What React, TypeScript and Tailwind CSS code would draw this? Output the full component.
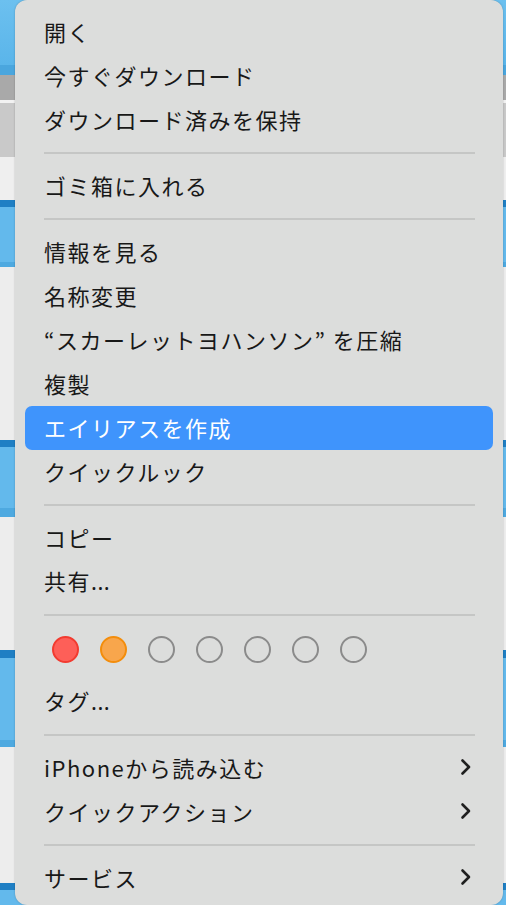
type Row =
  | { kind: 'item'; label: string; dots?: boolean; active?: boolean; submenu?: boolean }
  | { kind: 'sep' }
  | { kind: 'tags' };

const rows: Row[] = [
  { kind: 'item', label: '開く' },
  { kind: 'item', label: '今すぐダウンロード' },
  { kind: 'item', label: 'ダウンロード済みを保持' },
  { kind: 'sep' },
  { kind: 'item', label: 'ゴミ箱に入れる' },
  { kind: 'sep' },
  { kind: 'item', label: '情報を見る' },
  { kind: 'item', label: '名称変更' },
  { kind: 'item', label: '“スカーレットヨハンソン” を圧縮' },
  { kind: 'item', label: '複製' },
  { kind: 'item', label: 'エイリアスを作成', active: true },
  { kind: 'item', label: 'クイックルック' },
  { kind: 'sep' },
  { kind: 'item', label: 'コピー' },
  { kind: 'item', label: '共有', dots: true },
  { kind: 'sep' },
  { kind: 'tags' },
  { kind: 'item', label: 'タグ', dots: true },
  { kind: 'sep' },
  { kind: 'item', label: 'iPhoneから読み込む', submenu: true },
  { kind: 'item', label: 'クイックアクション', submenu: true },
  { kind: 'sep' },
  { kind: 'item', label: 'サービス', submenu: true },
];

// finder window rows peeking out behind the menu
function Backdrop() {
  return (
    <div className="flex flex-col h-full">
      <div className="h-[65px] bg-gradient-to-b from-[#6cc0ef] to-[#5ab5ea]" />
      <div className="h-[10px] bg-[#4aa6de]" />
      <div className="h-[25px] bg-[#a9a9a9]" />
      <div className="h-[3px] bg-[#f2f2f2]" />
      <div className="h-[54px] bg-[#c9c9c9]" />
      <div className="h-[43px] bg-[#efefef]" />
      <div className="h-[7px] bg-[#1f7fc4]" />
      <div className="h-[55px] bg-[#63b9ec]" />
      <div className="h-[5px] bg-[#4ea9e0]" />
      <div className="h-[173px] bg-[#ededed]" />
      <div className="h-[7px] bg-[#1f7fc4]" />
      <div className="h-[61px] bg-[#63b9ec]" />
      <div className="h-[9px] bg-[#4ea9e0]" />
      <div className="h-[133px] bg-[#ededed]" />
      <div className="h-[8px] bg-[#1f7fc4]" />
      <div className="h-[82px] bg-[#63b9ec]" />
      <div className="h-[7px] bg-[#4ea9e0]" />
      <div className="h-[136px] bg-[#ededed]" />
      <div className="h-[7px] bg-[#1f7fc4]" />
      <div className="flex-1 bg-[#63b9ec]" />
    </div>
  );
}

function TagDots() {
  return (
    <div className="h-[54px] flex items-start pt-[10px] pl-[27px] gap-[21px]">
      <span className="w-[27px] h-[27px] rounded-full bg-[#fe5f58] border-2 border-[#f23b30]" />
      <span className="w-[27px] h-[27px] rounded-full bg-[#f8a64c] border-2 border-[#f38d0c]" />
      {[0, 1, 2, 3, 4].map((i) => (
        <span key={i} className="w-[27px] h-[27px] rounded-full border-2 border-[#8b8b8b]" />
      ))}
    </div>
  );
}

function Chevron() {
  return (
    <svg width="12" height="18" viewBox="0 0 12 18" fill="none" className="mr-[1px]">
      <path d="M2.5 2.5 L9 9 L2.5 15.5" stroke="#1f1f1f" strokeWidth="2.6" strokeLinecap="round" strokeLinejoin="round" />
    </svg>
  );
}

export default function App() {
  return (
    <div
      className="relative w-[506px] h-[905px] overflow-hidden"
      style={{ fontFamily: "'Noto Sans CJK JP', 'Noto Sans', sans-serif" }}
    >
      <Backdrop />

      <div className="absolute left-[15px] top-0 w-[488px] h-[905px] rounded-[12px] bg-[#dcdddc] px-[10px] pt-[10px] shadow-[0_0_2px_rgba(0,0,0,0.25)]">
        {rows.map((row, i) => {
          if (row.kind === 'sep') {
            return (
              <div key={i} className="h-[22px] flex items-center pl-[19px] pr-[18px]">
                <div className="h-[2px] w-full bg-[#c5c6c5]" />
              </div>
            );
          }
          if (row.kind === 'tags') return <TagDots key={i} />;
          return (
            <div
              key={i}
              className={`h-[44px] flex items-center justify-between pl-[19px] pr-[20px] pb-[3px] rounded-[7px] text-[22px] tracking-[1.5px] ${
                row.active ? 'bg-[#3f94fc] text-white' : 'text-[#181818]'
              }`}
            >
              <span className="leading-none">
                {row.label}
                {row.dots && (
                  <span className="tracking-[0.5px]" style={{ fontFamily: "'Noto Sans', sans-serif" }}>
                    ...
                  </span>
                )}
              </span>
              {row.submenu && <Chevron />}
            </div>
          );
        })}
      </div>
    </div>
  );
}
